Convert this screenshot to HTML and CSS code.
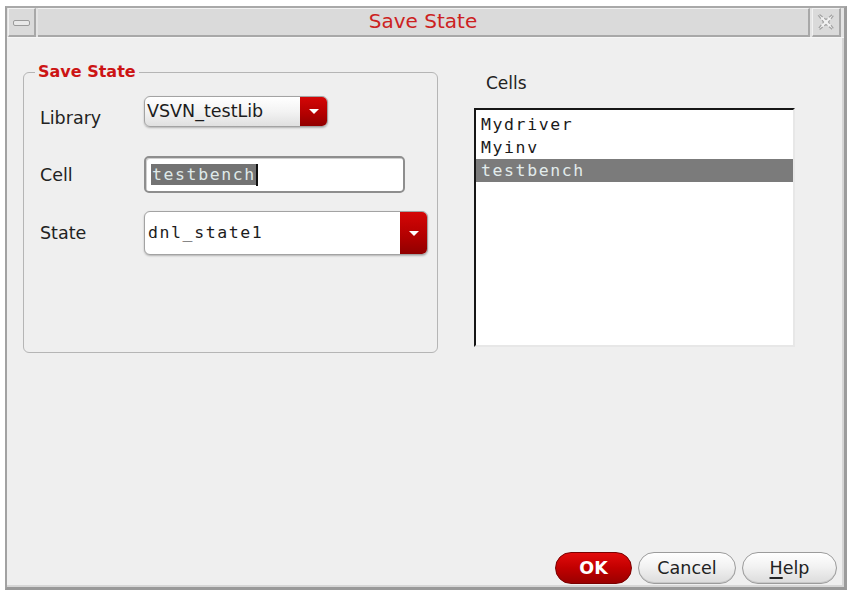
FILE: index.html
```html
<!DOCTYPE html>
<html>
<head>
<meta charset="utf-8">
<link rel="stylesheet" href="styles.css">
</head>
<body>
<div class="window">
  <div class="titlebar">
    <div class="tb-btn tb-min"><span class="min-glyph"></span></div>
    <div class="tb-title">Save State</div>
    <div class="tb-btn tb-close">
      <svg width="20" height="20" viewBox="0 0 20 20">
        <path d="M3.5 2.5 L10 7.5 L16.5 2.5 L17.5 3.5 L12.5 10 L17.5 16.5 L16.5 17.5 L10 12.5 L3.5 17.5 L2.5 16.5 L7.5 10 L2.5 3.5 Z" fill="#f2f2f2" stroke="#a2a2a2" stroke-width="1.2" stroke-dasharray="4 2"/>
      </svg>
    </div>
  </div>
  <div class="content">
    <div class="main">
      <div class="group">
        <span class="legend">Save State</span>
        <div class="rows">
          <div class="row row-lib">
            <div class="label">Library</div>
            <div class="combo combo-lib">
              <span class="combo-text">VSVN_testLib</span>
              <span class="combo-arrow"><span class="tri"></span></span>
            </div>
          </div>
          <div class="row row-cell">
            <div class="label">Cell</div>
            <div class="input"><span class="sel">testbench</span><span class="caret"></span></div>
          </div>
          <div class="row row-state">
            <div class="label">State</div>
            <div class="combo combo-state">
              <span class="combo-text mono">dnl_state1</span>
              <span class="combo-arrow"><span class="tri"></span></span>
            </div>
          </div>
        </div>
      </div>
      <div class="cells">
        <div class="cells-label">Cells</div>
        <div class="list">
          <div class="item">Mydriver</div>
          <div class="item">Myinv</div>
          <div class="item selected">testbench</div>
        </div>
      </div>
    </div>
    <div class="footer">
      <button class="btn btn-ok">OK</button>
      <button class="btn btn-cancel">Cancel</button>
      <button class="btn btn-help"><u>H</u>elp</button>
    </div>
  </div>
</div>
</body>
</html>
```
FILE: styles.css
```css
html, body {
  margin: 0;
  padding: 0;
  background: #ffffff;
}
body {
  font-family: "DejaVu Sans", sans-serif;
  color: #222;
}
.window {
  margin: 6px 0 0 5px;
  width: 842px;
  height: 584px;
  box-sizing: border-box;
  border-top: 2px solid #a9a9a9;
  border-left: 2px solid #a2a2a2;
  border-right: 3px solid #9c9c9c;
  border-bottom: 3px solid #999;
  background: #efefef;
  display: flex;
  flex-direction: column;
  box-shadow: inset -2px -2px 0 #d6d6d6;
}
.titlebar {
  height: 29px;
  display: flex;
  align-items: stretch;
  padding: 0 3px 0 1px;
  background: #e4e4e4;
  border-bottom: 1px solid #f6f6f6;
}
.tb-btn {
  box-sizing: border-box;
  background: #dadada;
  border-top: 1px solid #f2f2f2;
  border-left: 1px solid #f2f2f2;
  border-right: 2px solid #a8a8a8;
  border-bottom: 2px solid #a8a8a8;
  display: flex;
  align-items: center;
  justify-content: center;
}
.tb-min {
  width: 28px;
}
.min-glyph {
  display: block;
  width: 15px;
  height: 4px;
  border: 1px solid #9a9a9a;
  border-radius: 2px;
  background: #e8e8e8;
  margin-top: 2px;
}
.tb-close {
  width: 29px;
  margin-left: 2px;
}
.tb-title {
  flex: 1;
  margin-left: 2px;
  box-sizing: border-box;
  background: #dadada;
  border-top: 1px solid #f2f2f2;
  border-right: 2px solid #a8a8a8;
  border-bottom: 2px solid #a8a8a8;
  color: #cc2121;
  font-size: 20px;
  line-height: 25px;
  text-align: center;
}
.content {
  flex: 1;
  display: flex;
  flex-direction: column;
}
.main {
  flex: 1;
  display: flex;
  align-items: flex-start;
  padding: 34px 0 0 16px;
}
.group {
  position: relative;
  box-sizing: border-box;
  width: 415px;
  height: 281px;
  border: 1px solid #b5b5b5;
  border-radius: 6px;
  padding: 23px 0 0 16px;
}
.legend {
  position: absolute;
  left: 11px;
  top: -11px;
  padding: 0 3px 0 3px;
  background: #efefef;
  color: #cc1414;
  font-weight: bold;
  font-size: 16px;
  line-height: 20px;
}
.rows {
  display: flex;
  flex-direction: column;
  gap: 16px;
}
.row {
  display: flex;
  align-items: center;
}
.row-lib {
  height: 44px;
  align-items: flex-start;
}
.row-lib .label {
  margin-top: 12px;
}
.row-cell {
  height: 37px;
}
.row-state {
  height: 44px;
  margin-top: 2px;
}
.label {
  width: 104px;
  font-size: 17.5px;
  line-height: 20px;
  color: #222;
}
.combo {
  box-sizing: border-box;
  display: flex;
  align-items: stretch;
  border: 1px solid #a3a3a3;
  border-radius: 6px;
  overflow: hidden;
  box-shadow: 0 1px 2px rgba(0,0,0,0.25);
}
.combo-lib {
  width: 184px;
  height: 31px;
  background: linear-gradient(#ffffff, #f3f3f3 50%, #e0e0e0);
}
.combo-lib .combo-text {
  line-height: 29px;
}
.combo-state {
  width: 284px;
  height: 44px;
  background: #ffffff;
}
.combo-state .combo-text {
  line-height: 40px;
  padding-top: 1px;
}
.combo-text {
  display: block;
  flex: 1;
  font-size: 17.5px;
  padding-left: 2px;
  color: #1c1c1c;
}
.mono {
  font-family: "DejaVu Sans Mono", monospace;
  font-size: 16.5px;
  letter-spacing: 1.6px;
  padding-left: 3px;
}
.combo-arrow {
  width: 27px;
  background: linear-gradient(#d40606, #b10000 60%, #900000);
  display: flex;
  align-items: center;
  justify-content: center;
}
.tri {
  width: 0;
  height: 0;
  border-left: 5px solid transparent;
  border-right: 5px solid transparent;
  border-top: 5px solid #ffffff;
}
.input {
  box-sizing: border-box;
  width: 261px;
  height: 37px;
  background: #ffffff;
  border: 2px solid #8e8e8e;
  border-radius: 5px;
  box-shadow: inset 1px 1px 0 #d0d0d0;
  display: flex;
  align-items: center;
  padding-left: 5px;
  font-family: "DejaVu Sans Mono", monospace;
  font-size: 16.5px;
  letter-spacing: 1.6px;
}
.sel {
  background: #737373;
  color: #dfe9e9;
  line-height: 21px;
  padding-left: 1px;
}
.caret {
  display: inline-block;
  width: 2px;
  height: 22px;
  background: #111;
}
.cells {
  margin-left: 36px;
  padding-top: 1px;
}
.cells-label {
  font-size: 17px;
  line-height: 20px;
  padding-left: 12px;
  color: #222;
}
.list {
  box-sizing: border-box;
  margin-top: 15px;
  width: 321px;
  height: 239px;
  background: #ffffff;
  border-top: 2px solid #161616;
  border-left: 2px solid #161616;
  border-right: 2px solid #e7e7e7;
  border-bottom: 2px solid #e7e7e7;
  padding-top: 3px;
  font-family: "DejaVu Sans Mono", monospace;
  font-size: 16.5px;
  letter-spacing: 1.6px;
}
.item {
  height: 23px;
  line-height: 23px;
  padding-left: 5px;
  color: #1a1a1a;
}
.item.selected {
  background: #7b7b7b;
  color: #e2ecec;
}
.footer {
  display: flex;
  justify-content: flex-end;
  gap: 6px;
  padding: 0 7px 3px 0;
}
.btn {
  box-sizing: border-box;
  height: 32px;
  border-radius: 16px;
  font-family: "DejaVu Sans", sans-serif;
  font-size: 17.5px;
  line-height: 28px;
  padding: 0;
  color: #222;
  border: 1px solid #9c9c9c;
  background: linear-gradient(#ffffff, #f2f2f2 45%, #dcdcdc);
  box-shadow: inset 0 -1px 0 #c8c8c8;
}
.btn-ok {
  width: 77px;
  color: #ffffff;
  font-weight: bold;
  border: 1px solid #7a0000;
  background: linear-gradient(#e20b0b, #c10000 50%, #9a0000);
  box-shadow: none;
}
.btn-cancel {
  width: 98px;
}
.btn-help {
  width: 95px;
}
.btn u {
  text-decoration-thickness: 2px;
  text-underline-offset: 3px;
}
```
